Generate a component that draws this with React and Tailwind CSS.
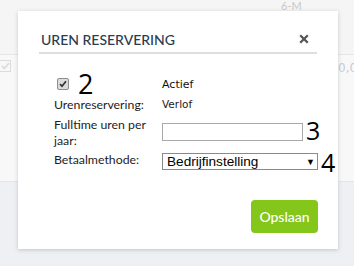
export default function App() {
  return (
    <div className="relative w-[354px] h-[266px] overflow-hidden bg-[#eff0f3]" style={{ fontFamily: "Lato, 'Open Sans', sans-serif" }}>
      {/* background page */}
      <div className="h-[54px] bg-[#f5f5f5] relative">
        <span className="absolute left-[281px] top-[0px] text-[11px] leading-[12px] text-[#c9c9c9]">6-M</span>
      </div>
      <div className="h-[128px] bg-[#f8f8f8] border-y border-[#e6e6e6] relative">
        <div className="absolute left-[-1px] top-[5px] w-[12px] h-[12px] border border-[#dcdcdc] bg-[#f8f8f8] flex items-center justify-center">
          <svg width="9" height="8" viewBox="0 0 9 8"><path d="M1 4l2.5 2.5L8 1" stroke="#dcdcdc" strokeWidth="1.8" fill="none" /></svg>
        </div>
        <span className="absolute left-[338px] top-[6px] text-[12px] leading-[14px] text-[#c8cbd8] whitespace-nowrap" style={{ fontFamily: "'DejaVu Sans', sans-serif" }}>0,00</span>
      </div>

      {/* modal */}
      <div className="absolute left-[18px] top-[11px] w-[320px] h-[238px] bg-white shadow-[0_1px_4px_rgba(60,70,100,0.25)] px-[21px] flex flex-col">
        <div className="pt-[19px] h-[43px] border-b-2 border-[#dedede] flex justify-between items-start shrink-0">
          <span className="text-[14px] leading-[20px] font-medium text-[#2b3b52] pl-[2px]">UREN RESERVERING</span>
          <svg width="10" height="10" viewBox="0 0 10 10" className="mt-[4px] mr-[8px]"><path d="M1.2 1.2l7.6 7.6M8.8 1.2L1.2 8.8" stroke="#555" strokeWidth="2.3" /></svg>
        </div>

        <div className="pl-[15px] text-[#1d1d1d]">
          {/* row 1 */}
          <div className="mt-[18px] h-[24px] flex items-center">
            <div className="w-[108px] shrink-0 flex items-center h-[24px]">
              <div className="ml-[3px] w-[12px] h-[12px] rounded-[2px] border border-[#8e8e8e] bg-[#dcdcdc] flex items-center justify-center">
                <svg width="8" height="8" viewBox="0 0 8 8"><path d="M1 4.2l2 2L7 1.2" stroke="#333" strokeWidth="1.7" fill="none" /></svg>
              </div>
              <span className="ml-[9px] text-[27px] leading-[22px] text-black" style={{ fontFamily: "'Open Sans', sans-serif" }}>2</span>
            </div>
            <span className="text-[11px] text-[#111] mt-[3px]" style={{ fontFamily: "'DejaVu Sans', sans-serif" }}>Actief</span>
          </div>
          {/* row 2 */}
          <div className="h-[17px] flex items-center">
            <span className="w-[108px] shrink-0 text-[12.3px] leading-[16px]">Urenreservering:</span>
            <span className="text-[10.5px] text-[#222] mt-[1px]" style={{ fontFamily: "'DejaVu Sans', sans-serif" }}>Verlof</span>
          </div>
          {/* row 3 */}
          <div className="mt-[4px] flex">
            <span className="w-[100px] mr-[8px] shrink-0 text-[12.3px] leading-[16px]">Fulltime uren per jaar:</span>
            <div className="flex items-start shrink-0">
              <input className="mt-[6px] w-[141px] h-[18px] border border-[#a9a9a9] bg-white outline-none shrink-0" />
              <span className="ml-[3px] text-[25px] leading-[22px] text-black mt-[2px]" style={{ fontFamily: "'Open Sans', sans-serif" }}>3</span>
            </div>
          </div>
          {/* row 4 */}
          <div className="mt-[2px] flex">
            <span className="w-[108px] shrink-0 text-[12.3px] leading-[18px]">Betaalmethode:</span>
            <div className="flex items-start shrink-0">
              <div className="mt-[2px] w-[156px] h-[17px] shrink-0 border border-[#8a8a8a] bg-white flex items-center justify-between pl-[4px] pr-[2px]" style={{ fontFamily: "'Liberation Sans', Arial, sans-serif" }}>
                <span className="text-[13.6px] leading-[15px] text-black">Bedrijfinstelling</span>
                <span className="text-[9px] leading-[10px] text-black">▼</span>
              </div>
              <span className="ml-[3px] text-[25px] leading-[22px] text-black" style={{ fontFamily: "'Open Sans', sans-serif" }}>4</span>
            </div>
          </div>
        </div>

        <div className="flex justify-end mt-[27px] mr-[-1px]">
          <button className="w-[67px] h-[33px] rounded-[4px] bg-[#84c61a] text-white text-[14px] font-medium">Opslaan</button>
        </div>
      </div>
    </div>
  );
}
